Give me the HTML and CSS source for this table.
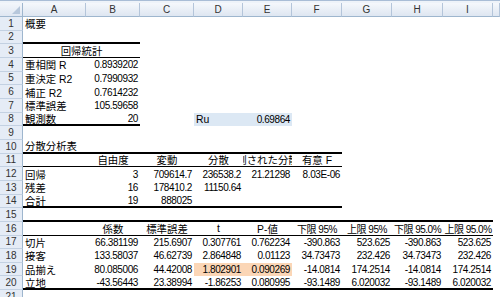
FILE: index.html
```html
<!DOCTYPE html>
<html lang="ja">
<head>
<meta charset="utf-8">
<title>回帰分析</title>
<link rel="stylesheet" href="styles.css">
</head>
<body>
<div class="sheet">
  <div class="topbar"></div>
  <div class="row hdr">
    <div class="corner"><span class="tri"></span></div>
    <div class="ch">A</div><div class="ch">B</div><div class="ch">C</div><div class="ch">D</div><div class="ch">E</div><div class="ch">F</div><div class="ch">G</div><div class="ch">H</div><div class="ch">I</div><div class="ch"></div>
  </div>
  <div class="row"><div class="rh">1</div><div class="c l">概要</div></div>
  <div class="row"><div class="rh">2</div><div class="c bt"></div><div class="c bt"></div></div>
  <div class="row"><div class="rh">3</div><div class="c m span2 bn">回帰統計</div></div>
  <div class="row"><div class="rh">4</div><div class="c l">重相関 R</div><div class="c r n">0.8939202</div></div>
  <div class="row"><div class="rh">5</div><div class="c l">重決定 R2</div><div class="c r n">0.7990932</div></div>
  <div class="row"><div class="rh">6</div><div class="c l">補正 R2</div><div class="c r n">0.7614232</div></div>
  <div class="row"><div class="rh">7</div><div class="c l">標準誤差</div><div class="c r n">105.59658</div></div>
  <div class="row"><div class="rh">8</div><div class="c l bt">観測数</div><div class="c r n bt">20</div><div class="c"></div><div class="c l blue">Ru</div><div class="c r n blue">0.69864</div></div>
  <div class="row"><div class="rh">9</div></div>
  <div class="row"><div class="rh">10</div><div class="c l bt">分散分析表</div><div class="c bt"></div><div class="c bt"></div><div class="c bt"></div><div class="c bt"></div><div class="c bt"></div></div>
  <div class="row"><div class="rh">11</div><div class="c bn"></div><div class="c m bn">自由度</div><div class="c m bn">変動</div><div class="c m bn">分散</div><div class="c m bn clip"><span class="inner">観測された分散比</span></div><div class="c m bn">有意 F</div></div>
  <div class="row"><div class="rh">12</div><div class="c l">回帰</div><div class="c r n">3</div><div class="c r n">709614.7</div><div class="c r n">236538.2</div><div class="c r n">21.21298</div><div class="c r n">8.03E-06</div></div>
  <div class="row"><div class="rh">13</div><div class="c l">残差</div><div class="c r n">16</div><div class="c r n">178410.2</div><div class="c r n">11150.64</div></div>
  <div class="row"><div class="rh">14</div><div class="c l bt">合計</div><div class="c r n bt">19</div><div class="c r n bt">888025</div><div class="c bt"></div><div class="c bt"></div><div class="c bt"></div></div>
  <div class="row"><div class="rh">15</div><div class="c bt"></div><div class="c bt"></div><div class="c bt"></div><div class="c bt"></div><div class="c bt"></div><div class="c bt"></div><div class="c bt"></div><div class="c bt"></div><div class="c bt"></div></div>
  <div class="row"><div class="rh">16</div><div class="c bn"></div><div class="c m bn">係数</div><div class="c m bn">標準誤差</div><div class="c m bn">t</div><div class="c m bn">P-値</div><div class="c m bn tight">下限 95%</div><div class="c m bn tight">上限 95%</div><div class="c m bn tight">下限 95.0%</div><div class="c m bn tight">上限 95.0%</div></div>
  <div class="row"><div class="rh">17</div><div class="c l">切片</div><div class="c r n">66.381199</div><div class="c r n">215.6907</div><div class="c r n">0.307761</div><div class="c r n">0.762234</div><div class="c r n">-390.863</div><div class="c r n">523.625</div><div class="c r n">-390.863</div><div class="c r n">523.625</div></div>
  <div class="row"><div class="rh">18</div><div class="c l">接客</div><div class="c r n">133.58037</div><div class="c r n">46.62739</div><div class="c r n">2.864848</div><div class="c r n">0.01123</div><div class="c r n">34.73473</div><div class="c r n">232.426</div><div class="c r n">34.73473</div><div class="c r n">232.426</div></div>
  <div class="row"><div class="rh">19</div><div class="c l">品揃え</div><div class="c r n">80.085006</div><div class="c r n">44.42008</div><div class="c r n org">1.802901</div><div class="c r n org">0.090269</div><div class="c r n">-14.0814</div><div class="c r n">174.2514</div><div class="c r n">-14.0814</div><div class="c r n">174.2514</div></div>
  <div class="row"><div class="rh">20</div><div class="c l bt">立地</div><div class="c r n bt">-43.56443</div><div class="c r n bt">23.38994</div><div class="c r n bt">-1.86253</div><div class="c r n bt">0.080995</div><div class="c r n bt">-93.1489</div><div class="c r n bt">6.020032</div><div class="c r n bt">-93.1489</div><div class="c r n bt">6.020032</div></div>
  <div class="row"><div class="rh">21</div></div>
</div>
</body>
</html>
```
FILE: styles.css
```css
* { box-sizing: border-box; }
html, body {
  margin: 0;
  height: 297px;
  overflow: hidden;
  background: #fff;
}
body {
  font-family: "Liberation Sans", "Noto Sans CJK JP", sans-serif;
  font-size: 10.4px;
  color: #000;
}
.sheet {
  display: flex;
  flex-direction: column;
  width: 500px;
}
.topbar {
  height: 3px;
  flex: none;
  background: #eef3f9;
  border-top: 1px solid #a9bdd6;
}
.row {
  display: grid;
  grid-template-columns: 23px 63px 54px 54px 49px 49px 50px 50px 51px 50px 7px;
  height: 13.66px;
  flex: none;
}
.row.hdr { height: 14px; }
.corner {
  position: relative;
  background: linear-gradient(#f3f6fb, #dfe7f2);
  border-right: 1px solid #9eb6ce;
  border-bottom: 1px solid #9eb6ce;
}
.tri {
  position: absolute;
  right: 2px;
  bottom: 2px;
  width: 0;
  height: 0;
  border-left: 8px solid transparent;
  border-bottom: 8px solid #b7c7db;
}
.ch {
  background: linear-gradient(#f5f8fc, #dee6f1);
  border-right: 1px solid #b4c5da;
  border-bottom: 1px solid #9eb6ce;
  display: flex;
  justify-content: center;
  align-items: center;
  font-size: 10px;
  color: #333;
}
.rh {
  background: #e5ecf6;
  border-right: 1px solid #9eb6ce;
  border-bottom: 1px solid #c3d1e2;
  display: flex;
  justify-content: center;
  align-items: center;
  font-size: 10px;
  color: #333;
}
.c {
  display: flex;
  align-items: center;
  padding: 0 2px;
  white-space: nowrap;
  overflow: hidden;
  min-width: 0;
}
.l { justify-content: flex-start; }
.r { justify-content: flex-end; }
.m { justify-content: center; }
.n { font-size: 10px; letter-spacing: -0.4px; }
.tight { padding: 0; font-size: 10px; letter-spacing: -0.5px; }
.clip { padding: 0; }
.clip .inner { flex: none; }
.span2 { grid-column: span 2; }
.bt { border-bottom: 2px solid #000; }
.bn { border-bottom: 1px solid #000; }
.blue { background: #dce8f4; }
.org { background: #fbd6b6; }
```
